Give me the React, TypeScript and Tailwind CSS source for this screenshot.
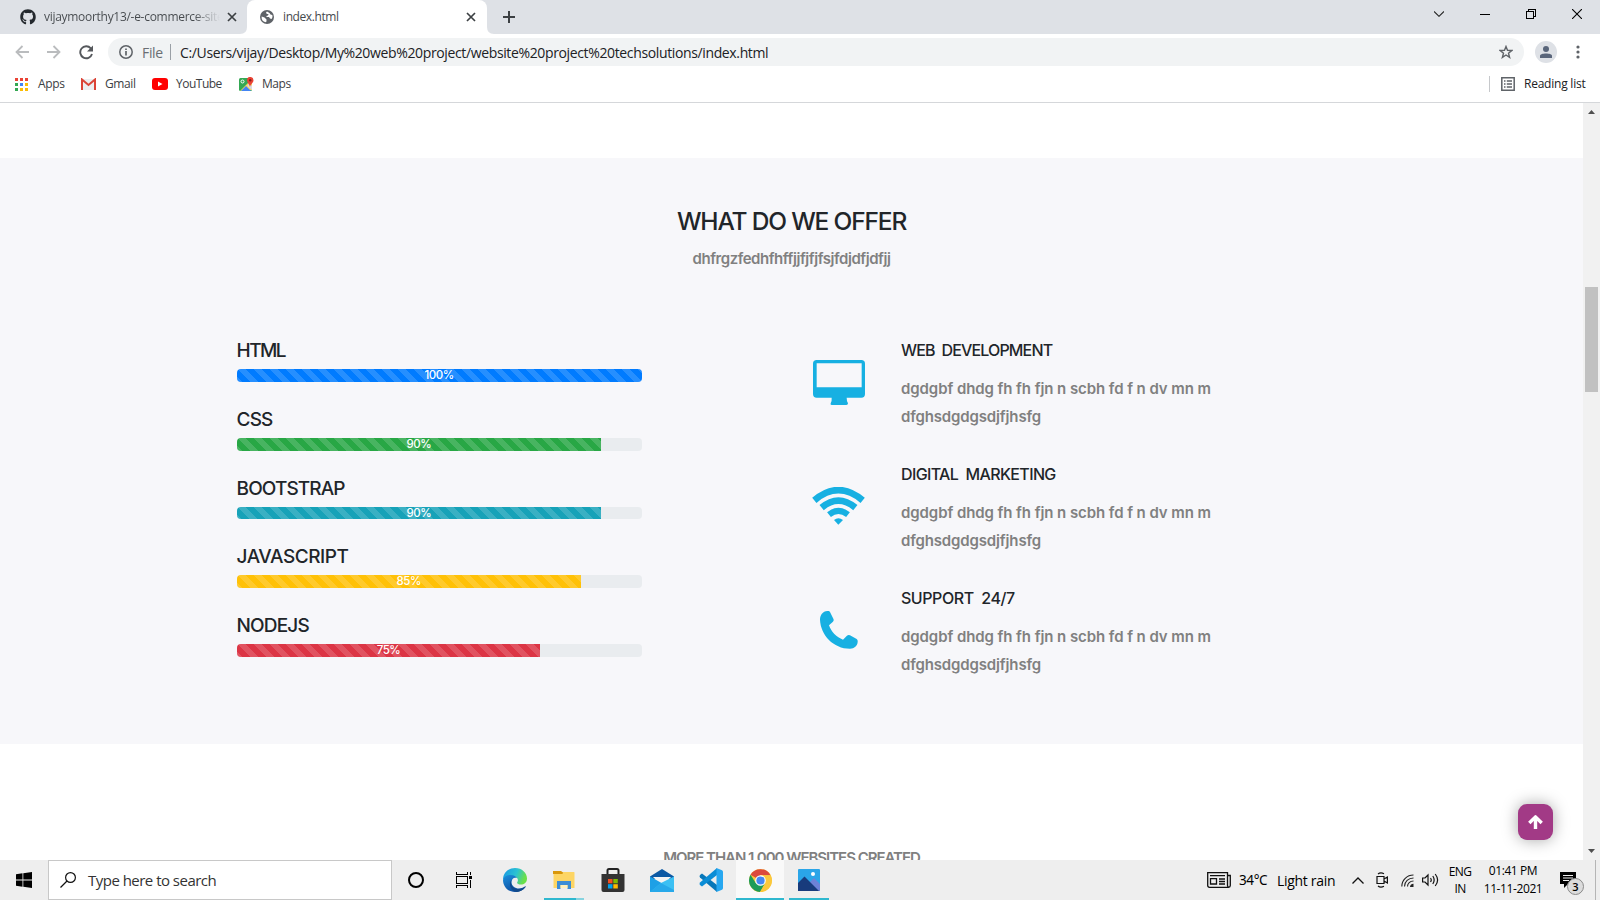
import React from "react";
import { FaGithub } from "react-icons/fa";

const skills = [
  { name: "HTML", value: 100, color: "bg-[#007bff]", track: "tracking-[-1.55px]" },
  { name: "CSS", value: 90, color: "bg-[#28a745]", track: "tracking-[-0.9px]" },
  { name: "BOOTSTRAP", value: 90, color: "bg-[#17a2b8]", track: "tracking-[-0.9px]" },
  { name: "JAVASCRIPT", value: 85, color: "bg-[#ffc107]", track: "tracking-[-0.45px]" },
  { name: "NODEJS", value: 75, color: "bg-[#dc3545]", track: "tracking-[-0.85px]" },
];

const services = [
  { title: "WEB  DEVELOPMENT", icon: <MonitorIcon />, track: "tracking-[-0.85px]" },
  { title: "DIGITAL  MARKETING", icon: <WifiIcon />, track: "tracking-[-0.63px]" },
  { title: "SUPPORT  24/7", icon: <PhoneIcon />, track: "tracking-[-0.45px]" },
];

function MonitorIcon() {
  return (
    <svg width="52" height="45" viewBox="0 0 156 135" fill="#17b0e2">
      <path fillRule="evenodd" d="M11 0H145Q156 0 156 11V102Q156 113 145 113H101Q101 124 105 130Q105 135 100 135H56Q51 135 53 130Q57 124 56 113H11Q0 113 0 102V11Q0 0 11 0ZM11 10V82H146V10Z" />
    </svg>
  );
}

function WifiIcon() {
  return (
    <svg width="53" height="38" viewBox="0 0 159 114" fill="none" stroke="#17b0e2" strokeWidth="20">
      <path d="M7 40Q79 -21 152 40" />
      <path d="M29 62Q79 20 130 62" />
      <path d="M51 83Q79 60 108 83" strokeWidth="18" />
      <path d="M66 99Q79 89 93 99L79 113Z" fill="#17b0e2" stroke="none" />
    </svg>
  );
}

function PhoneIcon() {
  return (
    <svg width="38" height="38" viewBox="0 0 114 114" fill="#17b0e2">
      <path d="M22 0Q27-1 30 3L40 23Q43 28 38 33L27 43C33 62 50 79 69 86L80 75Q85 70 90 73L110 84Q114 87 113 93C112 105 103 113 90 113C40 113 2 72 0 26C0 12 8 1 22 0Z" />
    </svg>
  );
}

function CloseX() {
  return (
    <svg width="10" height="10" viewBox="0 0 10 10" stroke="#3c4043" strokeWidth="1.7">
      <path d="M1 1L9 9M9 1L1 9" />
    </svg>
  );
}

function TabStrip() {
  return (
    <div className="flex h-[34px] items-stretch bg-[#dee1e6]">
      <div className="flex w-[240px] shrink-0 items-center pl-5">
        <FaGithub className="size-4 shrink-0 text-[#24292e]" />
        <div className="ml-2 w-[176px] overflow-hidden whitespace-nowrap bg-linear-to-r from-[#45494d] from-85% to-transparent bg-clip-text text-[12px] leading-[18px] tracking-[-0.29px] text-transparent">
          vijaymoorthy13/-e-commerce-site
        </div>
        <span className="ml-[7px]"><CloseX /></span>
      </div>
      <div className="flex w-[7px] shrink-0 items-end">
        <svg width="7" height="7" viewBox="0 0 7 7"><path d="M7 0V7H0Q7 7 7 0Z" fill="#fff" /></svg>
      </div>
      <div className="flex w-[240px] shrink-0 items-center rounded-t-lg bg-white pl-[13px]">
        <svg width="14" height="14" viewBox="0 0 14 14" className="shrink-0">
          <circle cx="7" cy="7" r="7" fill="#5f6368" />
          <path d="M7 1.500C5.500 2.200 6 3.800 7.200 4H8.500L8 5.500L6.500 6V7H9L10 8.500L11.500 9C12.700 7.500 12.700 6 12.200 5L10.500 4.500L9.500 3ZM1.600 6.500L4.500 7.500L6.500 9.500V11.500L5.500 12.300C3 11.500 1.300 10 1.600 6.500Z" fill="#fff" />
        </svg>
        <span className="ml-[9px] w-[183px] text-[12px] leading-[18px] tracking-[-0.4px] text-[#45494d]">index.html</span>
        <CloseX />
      </div>
      <div className="flex w-[7px] shrink-0 items-end">
        <svg width="7" height="7" viewBox="0 0 7 7"><path d="M0 0V7H7Q0 7 0 0Z" fill="#fff" /></svg>
      </div>
      <svg width="12" height="12" viewBox="0 0 12 12" className="mt-[11px] ml-[9px]" stroke="#3c4043" strokeWidth="2"><path d="M6 0V12M0 6H12" /></svg>
      <div className="mr-[18px] ml-auto flex h-7 items-center gap-[36px]">
        <svg width="10" height="6" viewBox="0 0 10 6" fill="none" stroke="#222" strokeWidth="1.1"><path d="M0 .5L5 5.300L10 .5" /></svg>
        <svg width="10" height="10" viewBox="0 0 10 10" stroke="#000" shapeRendering="crispEdges"><path d="M0 5.500H10" /></svg>
        <svg width="10" height="10" viewBox="0 0 10 10" fill="none" stroke="#000" shapeRendering="crispEdges"><path d="M.5 2.500H7.500V9.500H.5ZM2.500 2.500V.5H9.500V7.500H7.500" /></svg>
        <svg width="10" height="10" viewBox="0 0 10 10" stroke="#000" strokeWidth="1.1"><path d="M0 0L10 10M10 0L0 10" /></svg>
      </div>
    </div>
  );
}

function Toolbar() {
  return (
    <div className="flex h-9 items-center bg-white pl-[15px]">
      <svg width="14" height="14" viewBox="0 0 14 14" fill="none" stroke="#babcbe" strokeWidth="1.800"><path d="M14 7H1.500M7.500 1L1.500 7L7.500 13" /></svg>
      <svg width="14" height="14" viewBox="0 0 14 14" className="ml-[18px]" fill="none" stroke="#babcbe" strokeWidth="1.800"><path d="M0 7H12.500M6.500 1L12.500 7L6.500 13" /></svg>
      <svg width="15" height="15" viewBox="0 0 15 15" className="ml-[18px]" fill="none" stroke="#55585c" strokeWidth="1.900"><path d="M13 9A6 6 0 1 1 11.800 3.300L13 4.600" /><path d="M14 .5V6.500H8Z" fill="#55585c" stroke="none" /></svg>
      <div className="ml-[14px] flex h-7 w-[1416px] items-center rounded-full bg-[#f1f3f4] pl-[11px]">
        <svg width="14" height="14" viewBox="0 0 14 14" fill="none" stroke="#5f6368" strokeWidth="1.500"><circle cx="7" cy="7" r="6.200" /><path d="M7 6V10.500M7 3.400V5" strokeWidth="1.700" /></svg>
        <span className="ml-[9px] w-[21px] text-[14px] tracking-[-0.35px] text-[#6a6e73]">File</span>
        <span className="ml-[7px] h-4 w-px bg-[#9aa0a6]" />
        <span className="ml-[9px] whitespace-nowrap text-[14px] tracking-[-0.365px] text-[#202124]">C:/Users/vijay/Desktop/My%20web%20project/website%20project%20techsolutions/index.html</span>
        <svg width="14" height="14" viewBox="0 0 14 14" className="mr-[11px] ml-auto" fill="none" stroke="#5f6368" strokeWidth="1.400"><path d="M7 1.500L8.500 5.300L12.800 5.500L9.500 8.200L10.600 12.400L7 10L3.400 12.400L4.500 8.200L1.200 5.500L5.500 5.300Z" /></svg>
      </div>
      <div className="ml-[11px] flex size-[22px] items-center justify-center rounded-full bg-[#dee1e6]">
        <svg width="12" height="12" viewBox="0 0 12 12" fill="#59657a"><circle cx="6" cy="3" r="3" /><path d="M0 12V10C0 6.800 12 6.800 12 10V12Z" /></svg>
      </div>
      <svg width="4" height="14" viewBox="0 0 4 14" className="ml-[19px]" fill="#5f6368"><circle cx="2" cy="2" r="1.600" /><circle cx="2" cy="7" r="1.600" /><circle cx="2" cy="12" r="1.600" /></svg>
    </div>
  );
}

const appDots = ["#ea4335", "#ea4335", "#ea4335", "#34a853", "#4285f4", "#fbbc04", "#34a853", "#fbbc04", "#fbbc04"];

function Bookmarks() {
  return (
    <div className="flex h-[33px] items-center border-b border-[#d5d7da] bg-white pb-1 pl-[15px] text-[12px] text-[#3c4043]">
      <svg width="13" height="13" viewBox="0 0 13 13" shapeRendering="crispEdges">
        {appDots.map((c, i) => <rect key={i} x={(i % 3) * 5} y={Math.floor(i / 3) * 5} width="3" height="3" fill={c} />)}
      </svg>
      <span className="ml-[10px] w-[27px] tracking-[-0.3px]">Apps</span>
      <svg width="15" height="12" viewBox="0 0 15 12" className="ml-[16px]"><path d="M0 1H15V12H0Z" fill="#eceef0" /><path d="M1 12V1.500L7.500 7L14 1.500V12" fill="none" stroke="#db4437" strokeWidth="2" /></svg>
      <span className="ml-[9px] w-[31px] tracking-[-0.4px]">Gmail</span>
      <svg width="16" height="12" viewBox="0 0 16 12" className="ml-[16px]"><rect width="16" height="12" rx="3" fill="#f00" /><path d="M6 3.500L10.500 6L6 8.500Z" fill="#fff" /></svg>
      <span className="ml-[8px] w-[46px] tracking-[-0.5px]">YouTube</span>
      <svg width="15" height="15" viewBox="0 0 15 15" className="ml-[17px]"><rect y="1" width="13" height="13" rx="1.500" fill="#34a853" /><path d="M1 14L13 2V13Z" fill="#fdd663" /><path d="M2 14L7 9L12 14Z" fill="#4285f4" /><path d="M8.500 9L13 13V9L10 6Z" fill="#dadce0" /><circle cx="3.500" cy="4.500" r="1.500" fill="none" stroke="#fff" /><path d="M11 10C10.500 7 8 6 8 3.200A3 3 0 0 1 14.500 3.200C14.500 6 11.500 7 11 10Z" fill="#ea4335" /><circle cx="11.200" cy="3.300" r="1.200" fill="#8c1d18" /></svg>
      <span className="ml-[8px] tracking-[-0.45px]">Maps</span>
      <span className="ml-auto h-4 w-px bg-[#c6c8cb]" />
      <svg width="14" height="14" viewBox="0 0 14 14" className="ml-[11px]" fill="none" stroke="#5f6368" strokeWidth="1.500"><path d="M.8 .8H13.200V13.200H.8Z" /><path d="M3 4H4.500M3 7H4.500M3 10H4.500M5.800 4H11M5.800 7H11M5.800 10H11" /></svg>
      <span className="mr-[14px] ml-[9px] w-[62px] whitespace-nowrap tracking-[-0.23px] text-[#202124]">Reading list</span>
    </div>
  );
}

function Page() {
  return (
    <div className="relative h-[757px] flex-1 overflow-hidden bg-white pt-[55px] font-[Inter,sans-serif]">
      <section className="flex h-[586px] flex-col bg-[#f7f7fa] pt-[45px]">
        <h2 className="text-center text-[24.500px] leading-[36px] font-medium tracking-[-1.160px] text-[#212529]">WHAT DO WE OFFER</h2>
        <p className="mt-[6px] text-center text-[15px] leading-[28px] font-semibold tracking-[-0.46px] text-[#808080]">dhfrgzfedhfhffjjfjfjfsjfdjdfjdfjj</p>
        <div className="mt-[64px] flex">
          <div className="ml-[236.600px] w-[405px]">
            {skills.map((s) => (
              <div key={s.name} className="h-[68.750px]">
                <h4 className={`h-[32px] text-[19px] leading-[27px] font-medium text-[#212529] ${s.track}`}>{s.name}</h4>
                <div className="h-[12.800px] overflow-hidden rounded-[4px] bg-[#e9ecef]">
                  <div
                    className={`h-full bg-[linear-gradient(45deg,rgba(255,255,255,.15)_25%,transparent_25%,transparent_50%,rgba(255,255,255,.15)_50%,rgba(255,255,255,.15)_75%,transparent_75%,transparent)] bg-[size:16px_16px] text-center text-[11.500px] leading-[12.800px] font-medium tracking-[-0.5px] text-white ${s.color}`}
                    style={{ width: `${s.value}%` }}
                  >
                    {s.value}%
                  </div>
                </div>
              </div>
            ))}
          </div>
          <div className="ml-[159.400px]">
            {services.map((s) => (
              <div key={s.title} className="flex h-[124px]">
                <div className="flex h-[90px] w-[76px] items-center justify-center">{s.icon}</div>
                <div className="ml-[24px]">
                  <h5 className={`h-[38px] whitespace-pre text-[16px] leading-[27px] font-medium text-[#212529] ${s.track}`}>{s.title}</h5>
                  <p className="w-[330px] whitespace-nowrap text-[15px] leading-[28px] font-semibold tracking-[-0.080px] text-[#808080]">dgdgbf dhdg fh fh fjn n scbh fd f n dv mn m<br /><span className="tracking-[-0.150px]">dfghsdgdgsdjfjhsfg</span></p>
                </div>
              </div>
            ))}
          </div>
        </div>
      </section>
      <p className="mt-[100px] text-center text-[15px] leading-[28px] font-semibold tracking-[-1.020px] text-[#808080]">MORE THAN 1,000 WEBSITES CREATED</p>
      <button className="absolute top-[701px] left-[1518px] flex h-9 w-[35px] items-center justify-center rounded-[9px] bg-[#a23a86] shadow-[0_0_16px_rgba(0,0,0,.35)]">
        <svg width="15" height="14" viewBox="0 0 15 14" fill="none" stroke="#fff" strokeWidth="3.400"><path d="M7.500 14V2M1.300 8L7.500 1.900L13.700 8" strokeLinejoin="round" /></svg>
      </button>
    </div>
  );
}

function Scrollbar() {
  return (
    <div className="flex h-[757px] w-[17px] flex-col items-center bg-[#f1f1f1] pt-[7px] pb-[7px]">
      <svg width="7" height="4" viewBox="0 0 7 4" fill="#505050"><path d="M0 4L3.500 0L7 4Z" /></svg>
      <div className="mt-[173px] h-[105px] w-[13px] bg-[#c1c1c1]" />
      <svg width="7" height="4" viewBox="0 0 7 4" className="mt-auto" fill="#505050"><path d="M0 0L3.500 4L7 0Z" /></svg>
    </div>
  );
}

function EdgeIcon() {
  return (
    <svg width="24" height="24" viewBox="0 0 24 24">
      <defs>
        <linearGradient id="e1" x1="0" y1="0" x2="1" y2="0.300"><stop offset="0.100" stopColor="#1b9de2" /><stop offset="0.600" stopColor="#2bc3d2" /><stop offset="1" stopColor="#6be04a" /></linearGradient>
        <linearGradient id="e2" x1="0" y1="0" x2="0.600" y2="1"><stop offset="0" stopColor="#1b8fdd" /><stop offset="1" stopColor="#0c4a9c" /></linearGradient>
      </defs>
      <path d="M0 12C0 4 6 0 12 0C19 0 24 5 24 10.500C24 14.500 21 16.500 18 16.500C15.500 16.500 13.700 15.500 14.200 14.300C16.500 11 13 8 9 8C4 8 0 12 0 12Z" fill="url(#e1)" />
      <path d="M0 12C1 8.500 4 7 7.500 7C11 7 13.500 8.500 14 10C11 8.800 8.500 11 8.500 14C8.500 18 12 20.500 16 20.500C19 20.500 21 19.300 22 18.500C22.600 18.200 22.800 18.600 22.500 19C20 22.500 16 24 12 24C5 24 0 18.500 0 12Z" fill="url(#e2)" />
      <path d="M9 11.500C7 14 8 20 14 21C18 21.500 21 19.500 22 18.500C22.600 18.200 22.800 18.600 22.500 19C20.500 22 17 24 13.500 23.900C8 23 4.500 16 9 11.500Z" fill="#114a8b" />
    </svg>
  );
}

function ExplorerIcon() {
  return (
    <svg width="22" height="19" viewBox="0 0 22 19">
      <path d="M1 1H21Q21.500 1 21.500 2V17H.5V2Z" fill="#fdd564" /><path d="M0 0H8L10 1.500L9.500 3H0Z" fill="#d9970b" />
      <path d="M4 10H18V18H14.500V14H7.500V18H4Z" fill="#3c8dd6" /><path d="M7.500 14H14.500V17H7.500Z" fill="#fff0bd" />
    </svg>
  );
}

function StoreIcon() {
  return (
    <svg width="24" height="24" viewBox="0 0 24 24">
      <path d="M6.500 8V2.500Q6.500 1 8 1H16Q17.500 1 17.500 2.500V8" fill="none" stroke="#222" strokeWidth="2" />
      <path d="M.5 6H23.500V22Q23.500 24 21.500 24H2.500Q.5 24 .5 22Z" fill="#333" />
      <path d="M7 11H11.500V15.300H7Z" fill="#f25022" /><path d="M12.300 11H16.800V15.300H12.300Z" fill="#7fba00" /><path d="M7 16.200H11.500V20.500H7Z" fill="#00a4ef" /><path d="M12.300 16.200H16.800V20.500H12.300Z" fill="#ffb900" />
    </svg>
  );
}

function MailIcon() {
  return (
    <svg width="24" height="23" viewBox="0 0 24 23">
      <path d="M0 7.500L12 0L24 7.500V10H0Z" fill="#0c59a4" /><path d="M3 8H21L14 15H10Z" fill="#f4f4f4" />
      <path d="M0 7.500L24 21V23H0Z" fill="#1ea0e6" /><path d="M0 23L11 14L24 7.500V23Z" fill="#3cc0f3" /><path d="M11 14L24 21V23H0Z" fill="#27a9ea" />
    </svg>
  );
}

function CodeIcon() {
  return (
    <svg width="24" height="24" viewBox="0 0 24 24">
      <path d="M1 7L3 5.500L18 17V24L1 9.500Q0 8 1 7Z" fill="#0877b9" /><path d="M1 17L3 18.500L18 7V0L1 14.500Q0 16 1 17Z" fill="#0b8dd6" />
      <path d="M17.500 0L23 2.200Q24 2.800 24 4V20Q24 21.200 23 21.800L17.500 24Z" fill="#27a7f0" />
    </svg>
  );
}

function ChromeIcon() {
  return (
    <svg width="23" height="23" viewBox="0 0 24 24">
      <circle cx="12" cy="12" r="12" fill="#fbc83b" />
      <path d="M12 12L1.600 6A12 12 0 0 1 22.400 6.500H12Z" fill="#dc4a3d" />
      <path d="M1.600 6A12 12 0 0 0 11.500 24L17 14.500L12 12L7 14.500Z" fill="#1d9c58" />
      <path d="M12 6.500H22.400A12 12 0 0 1 11.500 24L17 14.500Z" fill="#fbc83b" />
      <circle cx="12" cy="12" r="5.500" fill="#fff" /><circle cx="12" cy="12" r="4.300" fill="#4688f1" />
    </svg>
  );
}

function PhotosIcon() {
  return (
    <svg width="22" height="22" viewBox="0 0 22 22">
      <rect width="22" height="22" rx="1" fill="#2aa5e8" /><path d="M12 13L16 9L22 15V22H12Z" fill="#6d82d7" /><path d="M0 14L6.500 7.500L21 22H0Z" fill="#183b7c" /><circle cx="15" cy="5" r="2" fill="#fff" />
    </svg>
  );
}

const pinned = [
  { name: "edge", icon: <EdgeIcon />, bar: "" },
  { name: "explorer", icon: <ExplorerIcon />, bar: "w-10 bg-linear-to-r from-[#2fb8cf] from-80% to-[#86d3df] to-80%" },
  { name: "store", icon: <StoreIcon />, bar: "" },
  { name: "mail", icon: <MailIcon />, bar: "" },
  { name: "code", icon: <CodeIcon />, bar: "" },
  { name: "chrome", icon: <ChromeIcon />, bar: "w-12 bg-[#2fb8cf]" },
  { name: "photos", icon: <PhotosIcon />, bar: "w-10 bg-[#2fb8cf]" },
];

function Taskbar() {
  return (
    <div className="flex h-10 items-stretch bg-[#eeeeee] text-black">
      <div className="flex w-12 items-center justify-center">
        <svg width="16" height="16" viewBox="0 0 16 16"><path d="M0 2.300L6.500 1.300V7.500H0ZM7.300 1.200L16 0V7.500H7.300ZM0 8.400H6.500V14.700L0 13.800ZM7.300 8.400H16V16L7.300 14.800Z" /></svg>
      </div>
      <div className="flex w-[344px] items-center border border-[#c8c8c8] bg-white pl-[11px]">
        <svg width="16" height="16" viewBox="0 0 16 16" fill="none" stroke="#111" strokeWidth="1.200"><circle cx="10.500" cy="5.500" r="4.900" /><path d="M7 9L.5 15.500" /></svg>
        <span className="ml-[12px] whitespace-nowrap text-[15px] tracking-[-0.52px] text-[#333]">Type here to search</span>
      </div>
      <div className="flex w-12 items-center justify-center"><span className="size-4 rounded-full border-2 border-black" /></div>
      <div className="flex w-12 items-center justify-center">
        <svg width="16" height="16" viewBox="0 0 16 16" fill="none" stroke="#000" shapeRendering="crispEdges"><path d="M.5 4.500H11.500V11.500H.5ZM.5 0V2.500H11.500V0M.5 16V13.500H11.500V16M14.500 0V3M14.500 8V16" /><path d="M13 4H16V7H13Z" fill="#000" stroke="none" /></svg>
      </div>
      <div className="ml-[3px] flex gap-px">
        {pinned.map((p) => (
          <div key={p.name} className={`flex w-12 flex-col items-center ${p.name === "chrome" ? "bg-[#f9f9f9]" : ""}`}>
            <div className="flex h-[38px] items-center pt-[2px]">{p.icon}</div>
            <div className={`h-[2px] ${p.bar}`} />
          </div>
        ))}
      </div>
      <div className="ml-auto flex items-center">
        <svg width="24" height="16" viewBox="0 0 24 16" fill="none" stroke="#111" strokeWidth="1.300"><path d="M.7 .7H20.500V13.500Q20.500 15.300 22 15.300H2.500Q.7 15.300 .7 13.500ZM20.500 3.500H23.300V13.500Q23.300 15.300 21.500 15.300" /><path d="M3.500 6.700H9.500V12H3.500ZM3 3.700H18M12 7H18M12 9.500H18M12 12H18" /></svg>
        <span className="ml-[8px] w-[30px] whitespace-nowrap font-['Noto_Sans',sans-serif] text-[13.500px] tracking-[-0.4px]">34°C</span>
        <span className="ml-[8px] w-[58px] whitespace-nowrap text-[14px] tracking-[-0.3px]">Light rain</span>
        <svg width="12" height="7" viewBox="0 0 12 7" className="ml-[17px]" fill="none" stroke="#111" strokeWidth="1.300"><path d="M.5 6.500L6 1L11.500 6.500" /></svg>
        <svg width="12" height="16" viewBox="0 0 12 16" className="ml-[12px]" fill="none" stroke="#111" strokeWidth="1.200"><path d="M1 4.500H8V11.500H1ZM8 7L11.400 5V11L8 9M2 2Q4.500 0 8 1.700M2 14Q4.500 16 8 14.300" /></svg>
        <svg width="13" height="13" viewBox="0 0 13 13" className="ml-[13px]" fill="none" stroke="#222" strokeWidth="1.100"><path d="M.8 12.500C.8 6 6 1 12.500 1M3.500 12.500C3.500 7.500 7.500 4 12.500 4M6.500 12.500C6.500 9.500 9 7 12.500 7" /><path d="M9 13Q9 10 12.500 9.800V13Z" fill="#222" stroke="none" /></svg>
        <svg width="17" height="14" viewBox="0 0 17 14" className="ml-[8px]" fill="none" stroke="#111" strokeWidth="1.200"><path d="M.6 5H3L6 2V12L3 9H.6ZM8.500 5Q10 7 8.500 9M10.800 3Q13.500 7 10.800 11M13.200 1Q18 7 13.200 13" /></svg>
        <div className="ml-[7px] w-[28px] text-center text-[12px] leading-[17px] tracking-[-0.7px]">ENG<br />IN</div>
        <div className="ml-[8px] w-[62px] whitespace-nowrap text-center text-[12px] leading-[18px] tracking-[-0.4px]">01:41 PM<br />11-11-2021</div>
        <div className="relative ml-[16px] h-[26px] w-[24px]">
          <svg width="16" height="16" viewBox="0 0 16 16" className="mt-[5px]"><path d="M0 0H16V12H8L4 16V12H0Z" /><path d="M3 3.500H13M3 6H13M3 8.500H9" stroke="#eee" /></svg>
          <span className="absolute top-[11px] left-[7px] flex size-[17px] items-center justify-center rounded-full border border-[#8a8a8a] bg-[#dcdcdc] text-[11px] leading-none font-semibold">3</span>
        </div>
        <span className="mr-1 ml-[11px] h-10 w-px bg-[#b5b5b5]" />
      </div>
    </div>
  );
}

export default function App() {
  return (
    <div className="h-[900px] w-[1600px] overflow-hidden bg-white font-['Open_Sans',sans-serif]">
      <TabStrip />
      <Toolbar />
      <Bookmarks />
      <div className="flex h-[757px]">
        <Page />
        <Scrollbar />
      </div>
      <Taskbar />
    </div>
  );
}
